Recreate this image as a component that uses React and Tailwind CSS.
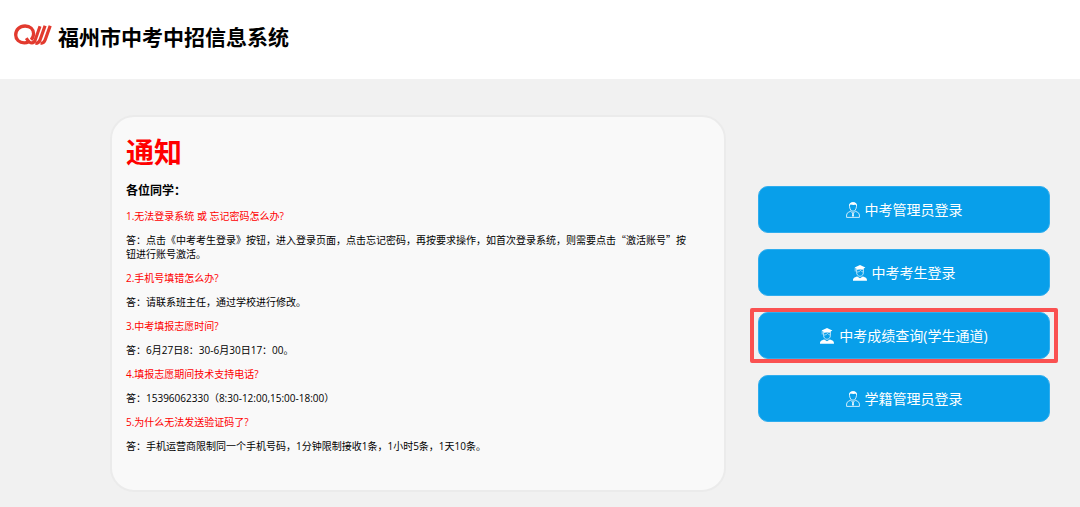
import React from 'react';

const notices = [
    { question: '1.无法登录系统 或 忘记密码怎么办?', answer: <>答：点击《中考考生登录》按钮，进入登录页面，点击忘记密码，再按要求操作，如首次登录系统，则需要点击<Quoted>激活账号</Quoted>按<br />钮进行账号激活。</> },
    { question: '2.手机号填错怎么办?', answer: '答：请联系班主任，通过学校进行修改。' },
    { question: '3.中考填报志愿时间?', answer: '答：6月27日8：30-6月30日17：00。' },
    { question: '4.填报志愿期间技术支持电话?', answer: '答：15396062330（8:30-12:00,15:00-18:00）' },
    { question: '5.为什么无法发送验证码了?', answer: '答：手机运营商限制同一个手机号码，1分钟限制接收1条，1小时5条，1天10条。' },
];

const entries = [
    { label: '中考管理员登录', icon: AdminIcon },
    { label: '中考考生登录', icon: StudentIcon },
    { label: '中考成绩查询(学生通道)', icon: StudentIcon, highlighted: true },
    { label: '学籍管理员登录', icon: AdminIcon },
];

// Chinese quotation marks need the CJK font to get their full width
function Quoted({ children }) {
    return <span className="font-['Noto_Sans_CJK_SC',sans-serif]">“{children}”</span>;
}

function Logo() {
    return (
        <svg className="h-[22px] w-[38px] shrink-0" viewBox="0 0 38 22" fill="none" stroke="#e23a2e" aria-hidden="true">
            <path d="M14.600 17.700C13.400 18.400 12 18.800 10.300 18.800 5.300 18.800 1.700 15.600 1.700 11 1.700 5.700 5.600 2 11.100 2c5 0 8.500 3.200 8.500 7.700 0 2.500-.9 4.500-2.500 6.100" strokeWidth="3.300" />
            <path d="M12.300 14.200C14 16.800 15.300 19 18 18.900c1.700-.1 2.500-1.200 3.200-3L26 2.200" strokeWidth="3.100" />
            <path d="M31.100 1.800 26.100 15.800Q25 19.300 21.300 19.500" strokeWidth="3.200" />
            <path d="M36.200 1.800 31.200 15.800Q30 19.300 26.500 19.500" strokeWidth="3.200" />
        </svg>
    );
}

function AdminIcon() {
    return (
        <svg className="h-4 w-[14px] shrink-0" viewBox="0 0 14 16" fill="none" stroke="white" aria-hidden="true">
            <path d="M3.500 4.500C3.300 1.800 4.600 .7 7 .7s3.900 1.100 3.500 3.800c-.4 2.800-1.600 4.700-3.500 4.700S3.900 7.300 3.500 4.500Z" strokeWidth=".8" />
            <path d="M3.300 4.400C2.900 1.400 4.300 .4 6 .4c3.400-.3 5.300.7 4.700 4L9.800 2.800C8 3 6 3 4.400 2.500Z" fill="white" stroke="none" />
            <path d="M5 8.700C4.500 10 .6 10 .6 13v2.400h12.800V13c0-3-3.900-3-4.400-4.300" strokeWidth=".8" />
            <path d="M4.800 9.600 7 11.200l2.200-1.600" strokeWidth=".7" />
            <path d="m6.400 11 .6-.4.600.4.300 3-.9 1-.9-1Z" fill="white" stroke="none" />
        </svg>
    );
}

function StudentIcon() {
    return (
        <svg className="h-4 w-[14px] shrink-0" viewBox="0 0 14 16" fill="white" aria-hidden="true">
            <path d="M7 0 12.400 2.600 10.700 3.600V5C9 4.200 5 4.200 3.300 5V3.600L1.600 2.600Z" />
            <path d="M2.200 2.800v3.700" stroke="white" strokeWidth=".6" />
            <path d="M3.600 4.800v2.800C3.600 9.600 5.200 11.300 7 11.300s3.400-1.700 3.400-3.700V4.800" fill="none" stroke="white" strokeWidth=".7" />
            <path d="M3.800 7.200C5.600 7 6.800 6.300 7.600 5.400 8.200 6.400 9.200 7 10.200 7.100" fill="none" stroke="white" strokeWidth=".6" />
            <path d="M0 15.800c0-2.600 1-3.400 4.300-4.200L7 13.200l2.700-1.600c3.300.8 4.300 1.600 4.300 4.200Z" />
        </svg>
    );
}

function EntryButton({ label, icon: Icon, highlighted }) {
    return (
        <div className="relative">
            <button
                type="button"
                className="flex h-[47px] w-full items-center justify-center gap-[5px] rounded-[10px] border border-[#2fadee] bg-[#089fea] text-sm text-white"
            >
                <Icon />
                {label}
            </button>
            {highlighted && (
                <div className="pointer-events-none absolute -top-1 -right-2 -bottom-1 -left-2 rounded-xs border-4 border-[#fa5151]" />
            )}
        </div>
    );
}

function App() {
    return (
        <div className="flex min-h-screen flex-col bg-white font-['Open_Sans','Noto_Sans_CJK_SC',sans-serif] text-black">
            <header className="flex h-[79px] items-start gap-1.5 px-3.5 pt-6">
                <Logo />
                <h1 className="text-[21px] leading-[26px] font-bold">福州市中考中招信息系统</h1>
            </header>

            <main className="grid flex-1 grid-cols-[minmax(0,1fr)_292px] items-start gap-8 bg-[#f1f1f1] pt-9 pr-[30px] pb-3.5 pl-[110px]">
                <section className="rounded-3xl border-2 border-[#ebebeb] bg-[#f9f9f9] px-3.5 pt-4 pb-9">
                    <h2 className="text-[28px] leading-[38px] font-bold text-[#ff0000]">通知</h2>
                    <h3 className="mt-3 text-xs font-bold">各位同学：</h3>
                    <div className="mt-2.5 space-y-2.5 text-[10px] leading-[14px]">
                        {notices.map(({ question, answer }) => (
                            <React.Fragment key={question}>
                                <p className="text-[#ff0000]">{question}</p>
                                <p>{answer}</p>
                            </React.Fragment>
                        ))}
                    </div>
                    <div className="h-px" />
                </section>

                <nav className="flex flex-col gap-4 self-center">
                    {entries.map((entry) => (
                        <EntryButton key={entry.label} {...entry} />
                    ))}
                </nav>
            </main>
        </div>
    );
}

export default App;
